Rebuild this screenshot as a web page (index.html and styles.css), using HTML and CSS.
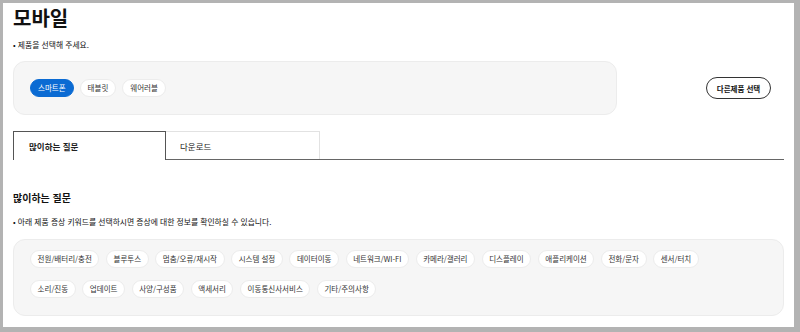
FILE: index.html
```html
<!DOCTYPE html>
<html lang="ko">
<head>
  <meta charset="UTF-8" />
  <meta name="viewport" content="width=device-width, initial-scale=1.0"/>
  <title>모바일</title>
  <link rel="stylesheet" href="styles.css">
</head>
<body>
  <div class="page">
    <h1 class="page-title">모바일</h1>
    <p class="notice">• 제품을 선택해 주세요.</p>

    <div class="product-row">
      <div class="pill-box product-box">
        <button class="pill active">스마트폰</button>
        <button class="pill">태블릿</button>
        <button class="pill">웨어러블</button>
      </div>
      <button class="other-btn">다른제품 선택</button>
    </div>

    <ul class="tabs">
      <li class="tab active">많이하는 질문</li>
      <li class="tab">다운로드</li>
    </ul>

    <h2 class="section-title">많이하는 질문</h2>
    <p class="notice">• 아래 제품 증상 키워드를 선택하시면 증상에 대한 정보를 확인하실 수 있습니다.</p>

    <div class="pill-box keyword-box">
      <div class="pill-row">
        <button class="pill">전원/배터리/충전</button>
        <button class="pill">블루투스</button>
        <button class="pill">멈춤/오류/재시작</button>
        <button class="pill">시스템 설정</button>
        <button class="pill">데이터이동</button>
        <button class="pill">네트워크/WI-FI</button>
        <button class="pill">카메라/갤러리</button>
        <button class="pill">디스플레이</button>
        <button class="pill">애플리케이션</button>
        <button class="pill">전화/문자</button>
        <button class="pill">센서/터치</button>
      </div>
      <div class="pill-row">
        <button class="pill">소리/진동</button>
        <button class="pill">업데이트</button>
        <button class="pill">사양/구성품</button>
        <button class="pill">액세서리</button>
        <button class="pill">이동통신사서비스</button>
        <button class="pill">기타/주의사항</button>
      </div>
    </div>
  </div>
</body>
</html>
```

FILE: styles.css
```css
html, body {
  margin: 0;
  padding: 0;
}

body {
  font-family: "Noto Sans CJK KR", "Noto Sans", sans-serif;
  color: #111;
  background-color: #b3b3b3;
}

.page {
  box-sizing: border-box;
  margin: 3px 6px 5px 3px;
  height: 324px;
  background-color: #ffffff;
  padding: 3px 10px 0;
  overflow: hidden;
}

.page-title {
  margin: 0;
  font-size: 20px;
  line-height: 24px;
  font-weight: bold;
}

.notice {
  margin: 9px 0 0;
  font-size: 7.8px;
  line-height: 12px;
}

.product-row {
  display: flex;
  align-items: center;
  justify-content: space-between;
  margin-top: 10px;
}

.pill-box {
  box-sizing: border-box;
  background-color: #f6f6f6;
  border: 1px solid #ececec;
  border-radius: 12px;
}

.product-box {
  display: flex;
  align-items: center;
  width: 604px;
  height: 54px;
  padding: 0 16px;
  gap: 6px;
}

.keyword-box {
  display: flex;
  flex-direction: column;
  gap: 12px;
  margin-top: 11px;
  height: 77px;
  padding: 10px 16px 0;
}

.pill-row {
  display: flex;
  gap: 6.5px;
}

.pill {
  height: 18px;
  padding: 0 7px;
  border: 1px solid #ececec;
  border-radius: 9px;
  background-color: #ffffff;
  color: #333;
  font-family: inherit;
  font-size: 7.5px;
  line-height: 16px;
  cursor: pointer;
}

.pill-row .pill {
  padding: 0 6.6px;
}

.pill.active {
  background-color: #0b6bd3;
  border-color: #0b6bd3;
  color: #ffffff;
}

.other-btn {
  height: 22px;
  width: 65px;
  margin-right: 13px;
  padding: 0;
  border: 1px solid #333;
  border-radius: 11px;
  background-color: #ffffff;
  color: #111;
  font-family: inherit;
  font-size: 7.5px;
  font-weight: bold;
  cursor: pointer;
}

.tabs {
  display: flex;
  list-style: none;
  margin: 16px 0 0;
  padding: 0;
  border-bottom: 1px solid #666;
}

.tab {
  box-sizing: border-box;
  width: 154px;
  height: 28px;
  padding-left: 14px;
  font-size: 8.5px;
  line-height: 28px;
  border: 1px solid #e2e2e2;
  border-bottom: none;
  color: #222;
}

.tab.active {
  width: 153px;
  border-color: #555;
  margin-bottom: -1px;
  height: 29px;
  background-color: #ffffff;
  font-weight: bold;
  padding-left: 15px;
}

.tab + .tab {
  border-left: none;
}

.section-title {
  margin: 31px 0 0;
  font-size: 10px;
  line-height: 14px;
  font-weight: bold;
}

.section-title + .notice {
  margin-top: 11px;
}
```
